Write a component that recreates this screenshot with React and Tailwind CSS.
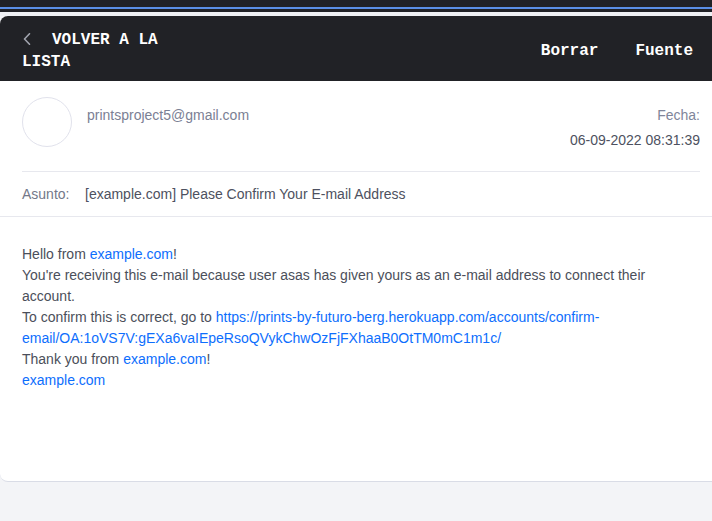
import React from "react";

const sans = { fontFamily: '"Liberation Sans", Arial, sans-serif' };

function Link({ children }) {
  return <a className="text-[#0d6efd]">{children}</a>;
}

export default function App() {
  return (
    <div className="w-[712px] h-[521px] overflow-hidden bg-[#f3f4f7]" style={sans}>
      <div className="h-[12px] bg-[#202126] flex flex-col">
        <div className="h-[7px]" />
        <div className="h-[2px] bg-[#5a8ee6]" />
      </div>
      <div className="h-[4px] bg-[#eef0f4]" />

      <div className="bg-white rounded-l-lg border-b border-[#d9dce6] overflow-hidden">
        <div className="bg-[#212226] flex items-center justify-between pl-[22px] pr-[19px] pt-[13px] pb-[8px] font-['Liberation_Mono',monospace] font-bold text-white text-[16px] leading-[22px]">
          <div className="w-[150px]">
            <svg width="8" height="12" viewBox="0 0 8 12" className="inline-block align-[-1px] mr-[21px] ml-[1px]">
              <polyline points="6.5,0.8 1.5,6 6.5,11.2" fill="none" stroke="#a0a3ad" strokeWidth="1.6" strokeLinecap="round" strokeLinejoin="round" />
            </svg>
            VOLVER A LA LISTA
          </div>
          <div className="flex gap-[37px]">
            <span>Borrar</span>
            <span>Fuente</span>
          </div>
        </div>

        <div className="pt-4 pl-[22px] pr-[12px]">
          <div className="flex justify-between">
            <div className="flex">
              <div className="w-[50px] h-[50px] rounded-full border-[1.5px] border-[#e1e2ec]" />
              <div className="ml-[15px] mt-2 text-[14px] leading-[20px] text-[#7b8094]">printsproject5@gmail.com</div>
            </div>
            <div className="flex flex-col items-end text-[14px] leading-[20px]">
              <div className="mt-2 text-[#80859a]">Fecha:</div>
              <div className="mt-[5px] text-[#4d5160]">06-09-2022 08:31:39</div>
            </div>
          </div>
          <div className="mt-[21px] border-t border-[#e7e8ee] flex py-[12px] text-[14px] leading-[20px]">
            <span className="text-[#737889] w-[63px]">Asunto:</span>
            <span className="text-[#4d5160]">[example.com] Please Confirm Your E-mail Address</span>
          </div>
        </div>

        <div className="border-t border-[#e7e8ee] pl-[22px] pr-[12px] pt-[27px] h-[265px] text-[14px] leading-[21px] text-[#4b4f5a]">
          <div>Hello from <Link>example.com</Link>!</div>
          <div>You're receiving this e-mail because user asas has given yours as an e-mail address to connect their account.</div>
          <div>
            To confirm this is correct, go to{" "}
            <Link>https://prints-by-futuro-berg.herokuapp.com/accounts/confirm-email/OA:1oVS7V:gEXa6vaIEpeRsoQVykChwOzFjFXhaaB0OtTM0mC1m1c/</Link>
          </div>
          <div>Thank you from <Link>example.com</Link>!</div>
          <div><Link>example.com</Link></div>
        </div>
      </div>
    </div>
  );
}
